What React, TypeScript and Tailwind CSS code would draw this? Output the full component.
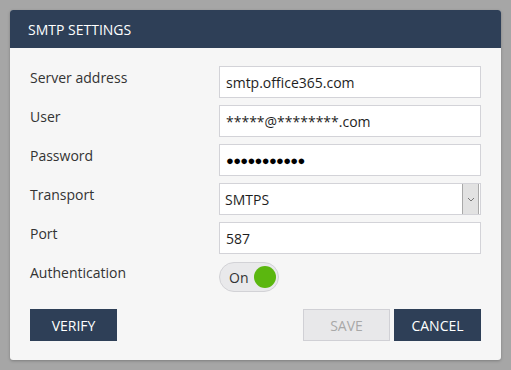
import React from "react";

const font = { fontFamily: '"Open Sans", "Noto Sans", sans-serif' };

function Field({ label, children }: { label: string; children: React.ReactNode }) {
  return (
    <div className="grid grid-cols-[189px_262px] items-start h-[32px]">
      <div className="pt-[2px] text-[14px] leading-[20px] text-[#333333]">{label}</div>
      <div>{children}</div>
    </div>
  );
}

function Input({ value, bold }: { value: string; bold?: boolean }) {
  return (
    <div className="h-[32px] w-[262px] bg-white border border-[#d3d3d8] flex items-center pl-[6px] text-[14px] text-[#1e1e1e]">
      {bold ? <span className="pt-[2px] text-[13px] tracking-[-0.7px] text-black">{value}</span> : value}
    </div>
  );
}

export default function App() {
  return (
    <div className="w-[511px] h-[370px] bg-[#a6a6a6] p-[10px]" style={font}>
      <div className="w-[491px] h-[350px] bg-[#f6f6f6] rounded-[3px] overflow-hidden shadow-[0_1px_3px_rgba(0,0,0,0.25)] flex flex-col">
        <div className="h-[38px] bg-[#2e3f57] flex items-center px-[18px] text-white text-[14px]">
          SMTP SETTINGS
        </div>
        <div className="pt-[18px] px-[20px] flex flex-col gap-[7px]">
          <Field label="Server address">
            <Input value="smtp.office365.com" />
          </Field>
          <Field label="User">
            <Input value="*****@********.com" />
          </Field>
          <Field label="Password">
            <Input value="●●●●●●●●●●●" bold />
          </Field>
          <Field label="Transport">
            <div className="h-[32px] w-[262px] bg-white border border-[#d3d3d8] flex items-center text-[14px] text-[#1e1e1e]">
              <div className="flex-1 pl-[5px]">SMTPS</div>
              <div className="h-[30px] w-[17px] mr-[1px] bg-[#e2e2e2] border-x border-[#a9a9a9] flex items-center justify-center">
                <svg width="8" height="5" viewBox="0 0 8 5">
                  <path d="M1 1 L4 4 L7 1" fill="none" stroke="#777" strokeWidth="1" />
                </svg>
              </div>
            </div>
          </Field>
          <Field label="Port">
            <Input value="587" />
          </Field>
          <Field label="Authentication">
            <div className="mt-[1px] h-[30px] w-[60px] rounded-full bg-[#e9e9eb] border border-[#d2d2d6] flex items-center justify-between pl-[9px] pr-[2px]">
              <span className="text-[14px] text-[#333333]">On</span>
              <span className="w-[22px] h-[22px] rounded-full bg-[#5bb70f]"></span>
            </div>
          </Field>
          <div className="flex items-center mt-[9px]">
            <div className="w-[87px] h-[32px] bg-[#2e3f57] text-white text-[14px] flex items-center justify-center">
              VERIFY
            </div>
            <div className="flex-1" />
            <div className="w-[87px] h-[32px] bg-[#e8e8ea] border border-[#d0d0d5] text-[#a8a8a8] text-[14px] flex items-center justify-center">
              SAVE
            </div>
            <div className="w-[87px] h-[32px] ml-[4px] bg-[#2e3f57] text-white text-[14px] flex items-center justify-center">
              CANCEL
            </div>
          </div>
        </div>
      </div>
    </div>
  );
}
